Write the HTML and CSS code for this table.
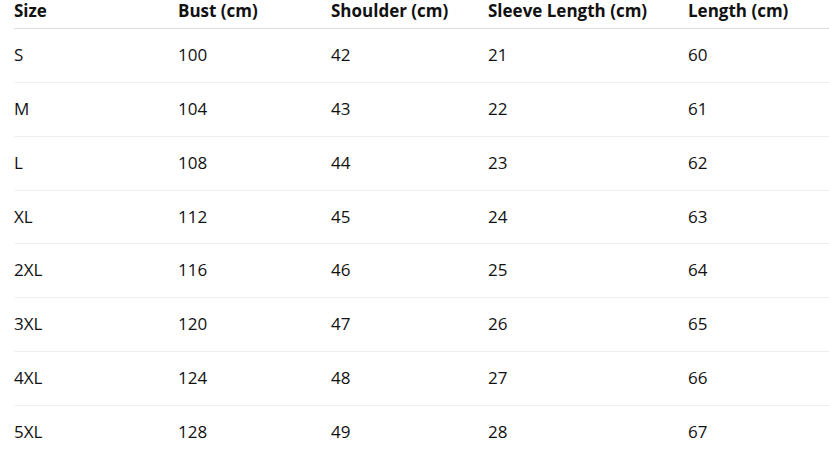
FILE: index.html
```html
<!DOCTYPE html>
<html lang="en">
<head>
<meta charset="utf-8">
<title>Size Chart</title>
<link rel="stylesheet" href="styles.css">
</head>
<body>
<table class="size-table">
  <colgroup>
    <col class="c1"><col class="c2"><col class="c3"><col class="c4"><col class="c5">
  </colgroup>
  <thead>
    <tr><th>Size</th><th>Bust (cm)</th><th>Shoulder (cm)</th><th>Sleeve Length (cm)</th><th>Length (cm)</th></tr>
  </thead>
  <tbody>
    <tr><td>S</td><td>100</td><td>42</td><td>21</td><td>60</td></tr>
    <tr><td>M</td><td>104</td><td>43</td><td>22</td><td>61</td></tr>
    <tr><td>L</td><td>108</td><td>44</td><td>23</td><td>62</td></tr>
    <tr><td>XL</td><td>112</td><td>45</td><td>24</td><td>63</td></tr>
    <tr><td>2XL</td><td>116</td><td>46</td><td>25</td><td>64</td></tr>
    <tr><td>3XL</td><td>120</td><td>47</td><td>26</td><td>65</td></tr>
    <tr><td>4XL</td><td>124</td><td>48</td><td>27</td><td>66</td></tr>
    <tr><td>5XL</td><td>128</td><td>49</td><td>28</td><td>67</td></tr>
  </tbody>
</table>
</body>
</html>
```
FILE: styles.css
```css
html, body {
  margin: 0;
  padding: 0;
  background: #fff;
  overflow: hidden;
}
body {
  font-family: "Open Sans", "Noto Sans", sans-serif;
  font-size: 17px;
  color: #111;
}
.size-table {
  margin-left: 14px;
  width: 815px;
  border-collapse: collapse;
  table-layout: fixed;
}
.c1 { width: 164px; }
.c2 { width: 153px; }
.c3 { width: 157px; }
.c4 { width: 200px; }
.c5 { width: 141px; }
.size-table th {
  text-align: left;
  font-weight: 700;
  line-height: 22px;
  padding: 0 0 6px 0;
  border-bottom: 1px solid #dcdcdc;
  white-space: nowrap;
}
.size-table td {
  line-height: 20.86px;
  padding: 16px 0;
  border-bottom: 1px solid #efefef;
  white-space: nowrap;
}
```
